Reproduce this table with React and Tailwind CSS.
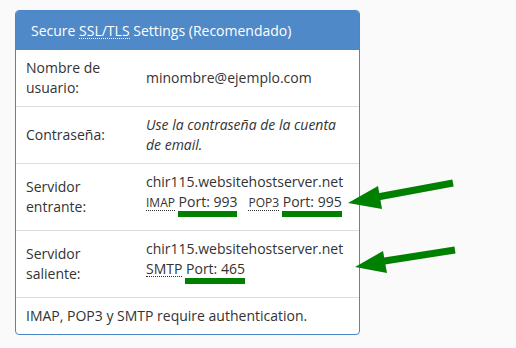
import React from 'react';

function Abbr({ children, small }) {
    return (
        <span className={`border-b border-dotted border-[#333] leading-[14px] inline-block ${small ? 'text-[12px]' : ''}`}>
            {children}
        </span>
    );
}

function Marked({ children }) {
    return (
        <span className="relative">
            {children}
            <span className="absolute left-[-1px] right-0 top-[19px] h-[6px] bg-[#008000]" />
        </span>
    );
}

function Row({ label, children, tall }) {
    return (
        <div className="grid grid-cols-[120px_1fr] border-t border-[#dddddd]">
            <div className="px-[10px] py-2 self-center">{label}</div>
            <div className={`px-[10px] pt-2 ${tall ? 'pb-[18px]' : 'pb-2 self-center'}`}>{children}</div>
        </div>
    );
}

export default function App() {
    return (
        <div
            className="relative w-[516px] h-[348px] bg-[#fafafa] pt-[10px] pl-[15px] text-[14px] leading-[20px] text-[#333]"
            style={{ fontFamily: '"Open Sans", "Liberation Sans", sans-serif' }}
        >
            <div className="w-[345px] bg-white border border-[#4a86c8] rounded-[4px] overflow-hidden">
                {/* Header */}
                <div className="h-[39px] bg-[#4f89c8] text-white px-[15px] flex items-center">
                    <span>
                        Secure <span className="border-b border-dotted border-white leading-[14px] inline-block">SSL/TLS</span> Settings (Recomendado)
                    </span>
                </div>

                <div className="grid grid-cols-[120px_1fr]">
                    <div className="px-[10px] py-2">Nombre de<br />usuario:</div>
                    <div className="px-[10px] py-2 self-center">minombre@ejemplo.com</div>
                </div>

                <Row label="Contraseña:">
                    <em>Use la contraseña de la cuenta de email.</em>
                </Row>

                <Row label={<>Servidor<br />entrante:</>} tall>
                    <div>chir115.websitehostserver.net</div>
                    <div className="whitespace-nowrap">
                        <Abbr small>IMAP</Abbr> <Marked>Port: 993</Marked>
                        <span className="ml-[11px]"><Abbr small>POP3</Abbr> <Marked>Port: 995</Marked></span>
                    </div>
                </Row>

                <Row label={<>Servidor<br />saliente:</>} tall>
                    <div>chir115.websitehostserver.net</div>
                    <div className="whitespace-nowrap">
                        <Abbr>SMTP</Abbr> <Marked>Port: 465</Marked>
                    </div>
                </Row>

                <div className="border-t border-[#dddddd] px-[10px] py-2">
                    IMAP, POP3 y SMTP require authentication.
                </div>
            </div>

            {/* Annotation arrows */}
            <svg className="absolute left-0 top-0 pointer-events-none" width="516" height="348" viewBox="0 0 516 348">
                <line x1="453" y1="183" x2="372" y2="198" stroke="#008000" strokeWidth="7" />
                <polygon points="348,203 378,186 382,209" fill="#008000" />
                <line x1="455" y1="250" x2="378" y2="262" stroke="#008000" strokeWidth="7" />
                <polygon points="355,267 383,251 387,273" fill="#008000" />
            </svg>
        </div>
    );
}
